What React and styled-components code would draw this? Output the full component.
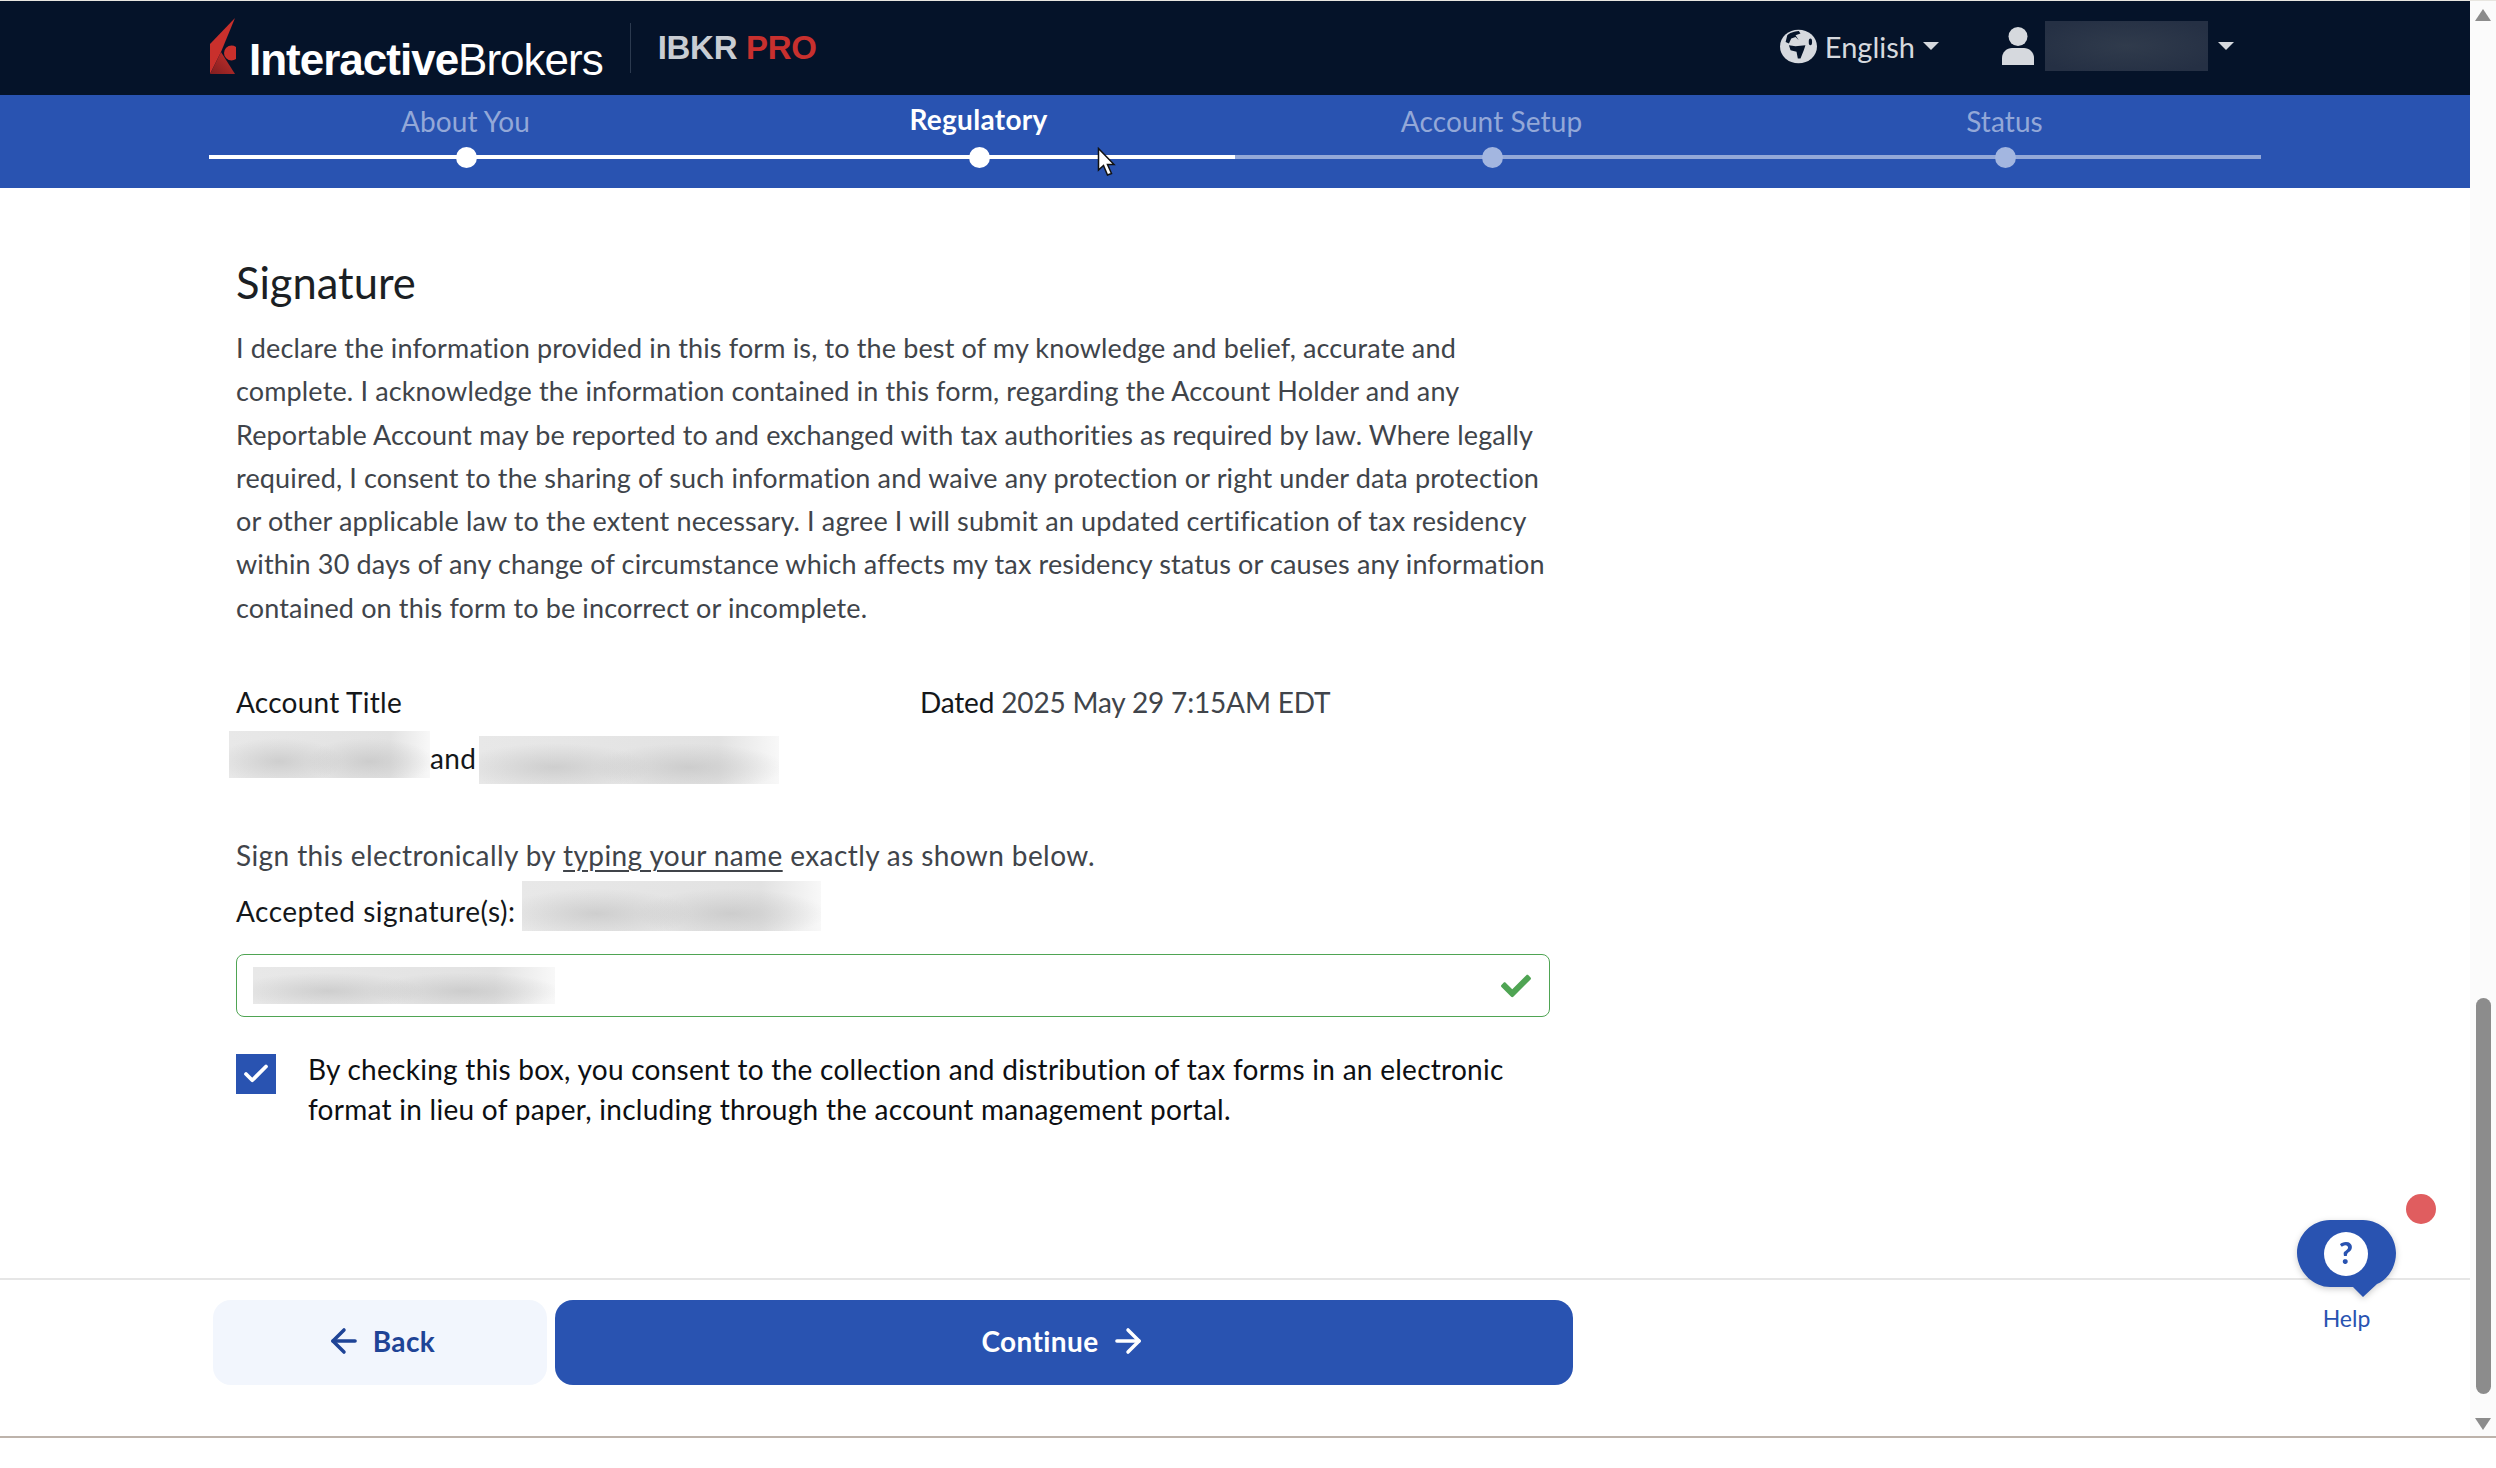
import React from "react";
import styled, { createGlobalStyle } from "styled-components";
import { FaCheck } from "react-icons/fa";
import { ArrowLeft, ArrowRight, Check } from "lucide-react";

const Global = createGlobalStyle`
html, body { margin: 0; padding: 0; background: #fff; overflow: hidden; }
* { box-sizing: border-box; }
body { font-family: "Lato", "Liberation Sans", sans-serif; }
`
const Page = styled.div`
position: relative;
width: 2496px;
height: 1468px;
display: flex;
flex-direction: column;
background: #fff;
`
const Frame = styled.div`
display: flex;
height: 1438px;
border-top: 1px solid #e8e6e0;
border-bottom: 2px solid #bdb3ab;
`
const Main = styled.div`
flex: 1;
display: flex;
flex-direction: column;
min-width: 0;
`
const Header = styled.header`
height: 94px;
background: #051329;
display: flex;
align-items: center;
padding-left: 209px;
`
const Brand = styled.div`
display: flex;
align-items: center;
`
const LogoMark = styled.svg`
flex: none;
margin: 0 4px 4px 1px;
`
const BrandName = styled.span`
font-family: "Liberation Sans", sans-serif;
font-size: 44px;
color: #fff;
letter-spacing: -1px;
margin-left: 9px;
margin-top: 24px;
b { font-weight: 700; }
`
const Divider = styled.div`
width: 1px;
height: 50px;
background: #2c3a4f;
margin-left: 27px;
`
const Product = styled.span`
font-family: "Liberation Sans", sans-serif;
font-size: 33px;
font-weight: 700;
letter-spacing: -0.3px;
color: #c9cdd3;
margin-left: 27px;
i { font-style: normal; color: #c8302e; }
`
const HeaderRight = styled.div`
margin-left: auto;
display: flex;
align-items: center;
color: #d6d9de;
padding: 0 236px 4px 0;
`
const Language = styled.div`
display: flex;
align-items: center;
font-size: 29px;
gap: 8px;
`
const Caret = styled.span`
width: 0;
height: 0;
border-left: 8px solid transparent;
border-right: 8px solid transparent;
border-top: 8px solid #d6d9de;
`
const UserMenu = styled.div`
display: flex;
align-items: center;
margin-left: 62px;
gap: 10px;
`
const Redacted = styled.div`
width: ${p => p.$w}px;
height: ${p => p.$h}px;
flex: none;
background:
  radial-gradient(ellipse 32% 50% at 25% 65%, rgba(190,190,190,.6), transparent),
  radial-gradient(ellipse 32% 50% at 70% 65%, rgba(190,190,190,.6), transparent),
  linear-gradient(90deg, #e8e8e8 0%, #e2e2e2 80%, #f8f8f8 100%);
`
const DarkRedacted = styled.div`
width: 163px;
height: 50px;
background: radial-gradient(ellipse 60% 60% at 50% 50%, #303b4c, #253044);
`
const Stepper = styled.nav`
height: 93px;
background: #2953b1;
padding: 0 209px;
display: grid;
grid-template-columns: repeat(4, 513px);
`
const Step = styled.div`
display: flex;
flex-direction: column;
align-items: center;
`
const StepLabel = styled.span`
height: 50px;
margin-top: ${p => p.$current ? 1 : 3}px;
line-height: 46px;
font-size: 28px;
letter-spacing: ${p => p.$current ? .3 : .1}px;
color: ${p => p.$current ? "#fff" : "#93a8d8"};
font-weight: ${p => p.$current ? 700 : 400};
`
const StepTrack = styled.div`
position: relative;
width: 100%;
height: 4px;
margin-top: ${p => p.$current ? 9 : 7}px;
background: ${p => p.$done ? "#fff" : "#93a8d8"};
`
const StepDot = styled.span`
position: absolute;
left: 50%;
top: 50%;
width: 21px;
height: 21px;
margin: -10.5px 0 0 -9.5px;
border-radius: 50%;
background: ${p => p.$done ? "#fff" : "#a3b6e0"};
`
const Pointer = styled.svg`
position: absolute;
left: 1097px;
top: 147px;
`
const Content = styled.main`
flex: 1;
padding: 69px 0 0 236px;
width: 1550px;
`
const Title = styled.h1`
margin: 0;
font-size: 43.5px;
line-height: 50px;
font-weight: 400;
color: #1b1f24;
`
const Declaration = styled.p`
margin: 19px 0 0;
width: 1316px;
font-size: 27px;
letter-spacing: .14px;
line-height: 43.3px;
color: #40444a;
`
const TitleRow = styled.div`
display: grid;
grid-template-columns: 684px auto;
margin-top: 53px;
font-size: 28px;
line-height: 40px;
color: #14171a;
`
const TitleLabel = styled.span`
letter-spacing: .25px;
`
const Dated = styled.span`
letter-spacing: -.17px;
`
const DatedValue = styled.span`
color: #40444a;
`
const Holders = styled.div`
display: flex;
align-items: center;
height: 53px;
margin: 9px 0 0 -7px;
font-size: 28px;
letter-spacing: .3px;
color: #14171a;
`
const HolderOne = styled(Redacted)`
align-self: flex-start;
`
const HolderTwo = styled(Redacted)`
align-self: flex-end;
margin-left: 3px;
`
const Instruction = styled.div`
margin-top: 51px;
font-size: 28px;
letter-spacing: .4px;
line-height: 40px;
color: #40444a;
u { text-underline-offset: 4px; text-decoration-thickness: 2px; }
`
const Accepted = styled.div`
display: flex;
align-items: flex-end;
gap: 7px;
margin-top: 6px;
font-size: 28px;
letter-spacing: .5px;
line-height: 40px;
color: #14171a;
`
const SignatureInput = styled.div`
display: flex;
align-items: center;
justify-content: space-between;
height: 63px;
margin-top: 23px;
padding: 0 18px 0 16px;
border: 1.5px solid #4fa453;
border-radius: 8px;
color: #4fa453;
font-size: 30px;
`
const ConsentRow = styled.label`
display: flex;
gap: 32px;
margin-top: 32px;
`
const CheckBox = styled.span`
flex: none;
width: 40px;
height: 40px;
margin-top: 5px;
display: flex;
align-items: center;
justify-content: center;
background: #2953b1;
color: #fff;
`
const ConsentText = styled.span`
font-size: 28px;
letter-spacing: .27px;
line-height: 40px;
color: #0d0f12;
`
const Footer = styled.footer`
height: 158px;
border-top: 2px solid #e6e6e6;
padding: 20px 0 0 213px;
display: flex;
align-items: flex-start;
gap: 8px;
`
const Button = styled.button`
width: ${p => p.$primary ? 1018 : 334}px;
height: 85px;
border: 0;
border-radius: 18px;
padding: 0 0 3px;
display: flex;
align-items: center;
justify-content: center;
gap: 10px;
font-family: inherit;
font-size: 28px;
font-weight: 700;
letter-spacing: .4px;
background: ${p => p.$primary ? "#2953b1" : "#f2f6fd"};
color: ${p => p.$primary ? "#fff" : "#1f4496"};
`
const Scrollbar = styled.div`
width: 26px;
background: #fbfbfb;
display: flex;
flex-direction: column;
align-items: center;
padding: 8px 0 6px 0;
`
const ScrollArrow = styled.span`
width: 0;
height: 0;
border-left: 8.5px solid transparent;
border-right: 8.5px solid transparent;
${p => p.$down ? "border-top: 12px solid #8c8c8c;" : "border-bottom: 12px solid #8c8c8c;"}
`
const ScrollSpacer = styled.div`
height: 977px;
`
const ScrollThumb = styled.div`
width: 15px;
height: 396px;
border-radius: 8px;
background: #8c8c8c;
margin-bottom: 24px;
`
const HelpWidget = styled.div`
position: absolute;
left: 2297px;
top: 1220px;
width: 99px;
display: flex;
flex-direction: column;
align-items: center;
color: #2953b1;
font-size: 23px;
`
const HelpBubble = styled.svg`
filter: drop-shadow(0 2px 3px rgba(0, 0, 0, .2));
`
const HelpLabel = styled.span`
margin-top: 6px;
line-height: 30px;
`
const HelpBadge = styled.span`
position: absolute;
left: 109px;
top: -26px;
width: 30px;
height: 30px;
border-radius: 50%;
background: #e05d5f;
`

const steps = [
  { label: "About You", done: true },
  { label: "Regulatory", done: true, current: true },
  { label: "Account Setup" },
  { label: "Status" },
];

function Logo() {
  return (
    <LogoMark width="26" height="56" viewBox="0 0 26 56">
      <defs>
        <linearGradient id="sail" x1="0" y1="1" x2="1" y2="0">
          <stop offset="0" stopColor="#7f1e20" />
          <stop offset="1" stopColor="#c9302c" />
        </linearGradient>
      </defs>
      <path d="M25 0 L0 26 L0 56 L11 34 Z" fill="#c9302c" />
      <path d="M0 56 L11 34 L25 56 Z" fill="url(#sail)" />
      <circle cx="21.5" cy="35" r="7.5" fill="#c9302c" />
    </LogoMark>
  );
}

function GlobeIcon() {
  return (
    <svg width="37" height="35" viewBox="0 0 112 102">
      <ellipse cx="56" cy="51" rx="56" ry="51" fill="#d6d9de" />
      <path d="M57 4 C42 6 28 10 22 17 L17 37 L27 42 L34 27 L47 22 L57 32 L47 17 L62 12 Z" fill="#051329" />
      <path d="M27 47 L47 50 L77 47 L72 62 L62 87 L54 87 L50 67 L32 62 Z" fill="#051329" />
      <ellipse cx="92" cy="37" rx="5" ry="10" fill="#051329" />
    </svg>
  );
}

function UserIcon() {
  return (
    <svg width="34" height="38" viewBox="0 0 34 38" fill="#d6d9de">
      <ellipse cx="17" cy="9.5" rx="9.5" ry="9.5" />
      <path d="M1 38 V31 C1 25 6 21 11 21 H23 C28 21 33 25 33 31 V38 Z" />
    </svg>
  );
}

export default function App() {
  return (
    <Page>
      <Global />
      <Frame>
        <Main>
          <Header>
            <Brand>
              <Logo />
              <BrandName><b>Interactive</b>Brokers</BrandName>
            </Brand>
            <Divider />
            <Product>IBKR <i>PRO</i></Product>
            <HeaderRight>
              <Language>
                <GlobeIcon />
                English
                <Caret />
              </Language>
              <UserMenu>
                <UserIcon />
                <DarkRedacted />
                <Caret />
              </UserMenu>
            </HeaderRight>
          </Header>
          <Stepper>
            {steps.map(s => (
              <Step key={s.label}>
                <StepLabel $current={s.current}>{s.label}</StepLabel>
                <StepTrack $done={s.done} $current={s.current}>
                  <StepDot $done={s.done} />
                </StepTrack>
              </Step>
            ))}
          </Stepper>
          <Content>
            <Title>Signature</Title>
            <Declaration>
              I declare the information provided in this form is, to the best of my knowledge and belief, accurate and complete. I acknowledge the information contained in this form, regarding the Account Holder and any Reportable Account may be reported to and exchanged with tax authorities as required by law. Where legally required, I consent to the sharing of such information and waive any protection or right under data protection or other applicable law to the extent necessary. I agree I will submit an updated certification of tax residency within 30 days of any change of circumstance which affects my tax residency status or causes any information contained on this form to be incorrect or incomplete.
            </Declaration>
            <TitleRow>
              <TitleLabel>Account Title</TitleLabel>
              <Dated>Dated <DatedValue>2025 May 29 7:15AM EDT</DatedValue></Dated>
            </TitleRow>
            <Holders>
              <HolderOne $w={201} $h={47} />
              and
              <HolderTwo $w={300} $h={48} />
            </Holders>
            <Instruction>
              Sign this electronically by <u>typing your name</u> exactly as shown below.
            </Instruction>
            <Accepted>
              Accepted signature(s):
              <Redacted $w={299} $h={50} />
            </Accepted>
            <SignatureInput>
              <Redacted $w={302} $h={37} />
              <FaCheck />
            </SignatureInput>
            <ConsentRow>
              <CheckBox><Check size={30} strokeWidth={3} /></CheckBox>
              <ConsentText>
                By checking this box, you consent to the collection and distribution of tax forms in an electronic format in lieu of paper, including through the account management portal.
              </ConsentText>
            </ConsentRow>
          </Content>
          <Footer>
            <Button>
              <ArrowLeft size={38} strokeWidth={2.2} />
              Back
            </Button>
            <Button $primary>
              Continue
              <ArrowRight size={38} strokeWidth={2.2} />
            </Button>
          </Footer>
        </Main>
        <Scrollbar>
          <ScrollArrow />
          <ScrollSpacer />
          <ScrollThumb />
          <ScrollArrow $down />
        </Scrollbar>
      </Frame>
      <Pointer width="20" height="30" viewBox="0 0 20 30">
        <path d="M1.5 1.5 V23 L6.5 18.5 L10.5 28 L14.5 26.5 L10.5 17.5 H17 Z" fill="#fff" stroke="#111" strokeWidth="1.5" />
      </Pointer>
      <HelpWidget>
        <HelpBubble width="99" height="77" viewBox="0 0 99 77">
          <path d="M33 0 H66 C84 0 99 15 99 33 C99 48 90 60 80 64 L66 77 L56 67 H33 C15 67 0 50 0 33 C0 15 15 0 33 0 Z" fill="#2953b1" />
          <circle cx="49" cy="34" r="22" fill="#fff" />
          <text x="49" y="44" textAnchor="middle" fontSize="30" fontWeight="900" fill="#2953b1" fontFamily="Lato, sans-serif">?</text>
        </HelpBubble>
        <HelpLabel>Help</HelpLabel>
        <HelpBadge />
      </HelpWidget>
    </Page>
  );
}
